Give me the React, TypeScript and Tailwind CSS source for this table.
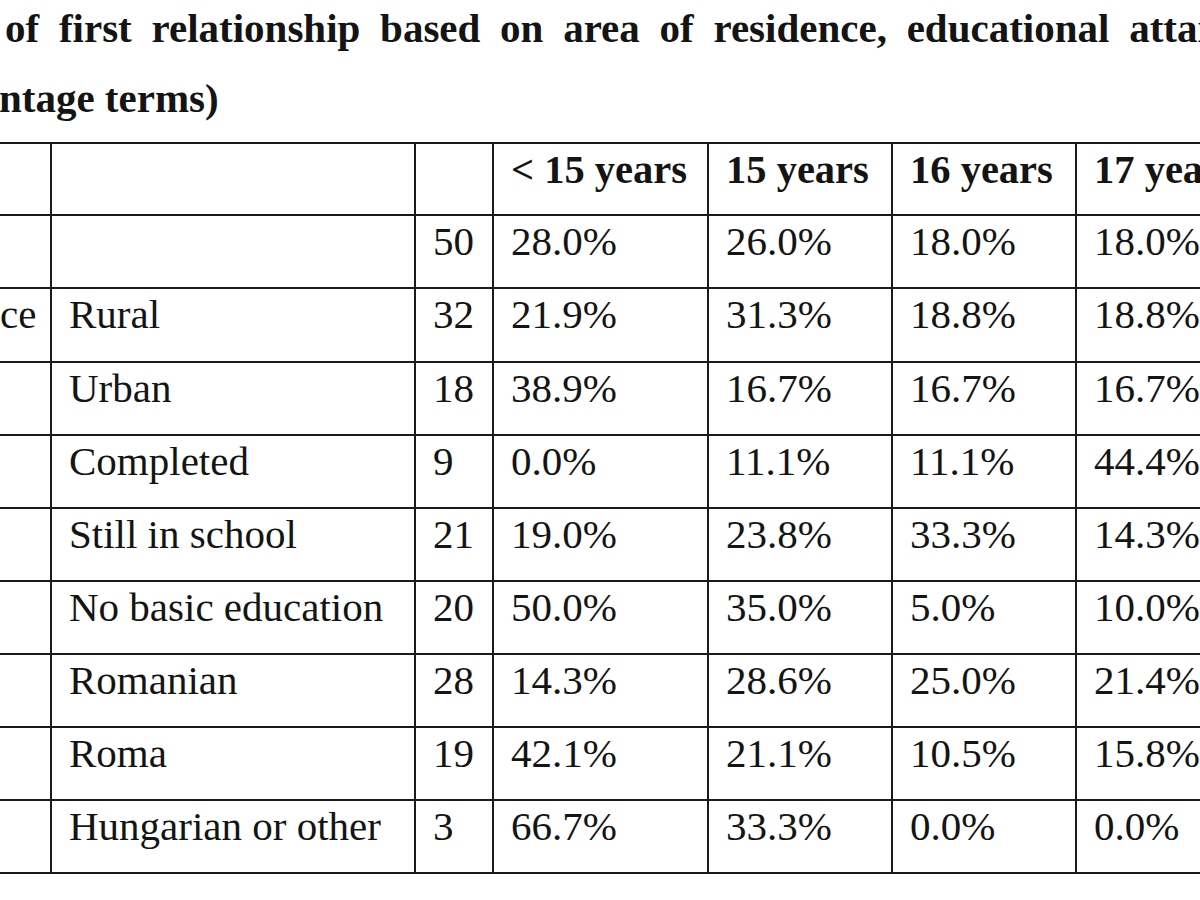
const rows: string[][] = [
  ["", "", "50", "28.0%", "26.0%", "18.0%", "18.0%"],
  ["Residence", "Rural", "32", "21.9%", "31.3%", "18.8%", "18.8%"],
  ["", "Urban", "18", "38.9%", "16.7%", "16.7%", "16.7%"],
  ["", "Completed", "9", "0.0%", "11.1%", "11.1%", "44.4%"],
  ["", "Still in school", "21", "19.0%", "23.8%", "33.3%", "14.3%"],
  ["", "No basic education", "20", "50.0%", "35.0%", "5.0%", "10.0%"],
  ["", "Romanian", "28", "14.3%", "28.6%", "25.0%", "21.4%"],
  ["", "Roma", "19", "42.1%", "21.1%", "10.5%", "15.8%"],
  ["", "Hungarian or other", "3", "66.7%", "33.3%", "0.0%", "0.0%"],
];

const header = ["", "", "", "< 15 years", "15 years", "16 years", "17 years"];

export default function App() {
  return (
    <div
      className="w-[1200px] h-[900px] overflow-hidden bg-white text-[#141414]"
      style={{ fontFamily: '"Liberation Serif", "Times New Roman", serif' }}
    >
      {/* caption, cut off on both sides */}
      <div className="font-bold text-[41px] whitespace-nowrap">
        <div className="pl-[5px] leading-[57px] [word-spacing:9.5px]">
          of first relationship based on area of residence, educational attainment and
        </div>
        <div className="ml-[-154px] leading-[83px]">(in percentage terms)</div>
      </div>

      <div className="mt-[2px] ml-[-151px] w-max grid grid-cols-[201px_364px_78px_215px_184px_184px_184px] border-t-2 border-l-2 border-[#1a1a1a] text-[41px] leading-[46px]">
        {header.map((h, i) => (
          <div
            key={"h" + i}
            className="h-[72px] border-r-2 border-b-2 border-[#1a1a1a] pl-[17px] pt-[3px] font-bold text-[40.5px] whitespace-nowrap"
          >
            {h}
          </div>
        ))}
        {rows.map((r, ri) =>
          r.map((c, ci) => (
            <div
              key={ri + "-" + ci}
              className={
                (ri === 1 ? "h-[74px] " : "h-[73px] ") +
                "border-r-2 border-b-2 border-[#1a1a1a] pl-[17px] pt-[2px] whitespace-nowrap"
              }
            >
              {c}
            </div>
          ))
        )}
      </div>
    </div>
  );
}
